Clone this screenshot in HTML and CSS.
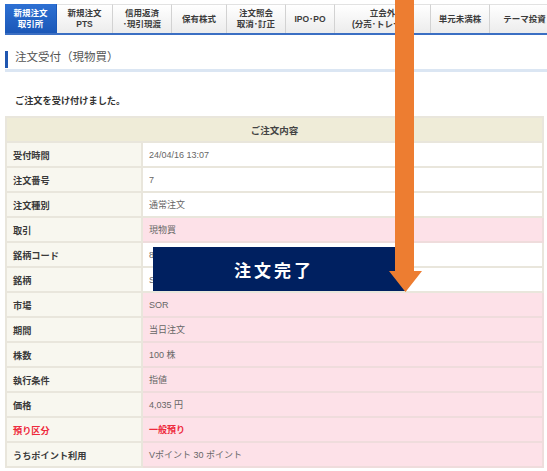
FILE: index.html
```html
<!DOCTYPE html>
<html lang="ja">
<head>
<meta charset="utf-8">
<link rel="stylesheet" href="styles.css">
</head>
<body>
<div class="page">
  <nav class="tabs">
    <div class="tab active w1">新規注文<br>取引所</div>
    <div class="tab w2">新規注文<br>PTS</div>
    <div class="tab w3">信用返済<br>･現引現渡</div>
    <div class="tab w4">保有株式</div>
    <div class="tab w5">注文照会<br>取消･訂正</div>
    <div class="tab w6">IPO･PO</div>
    <div class="tab w7">立会外<br>(分売･トレード)</div>
    <div class="tab w8">単元未満株</div>
    <div class="tab w9">テーマ投資</div>
  </nav>

  <h1 class="title">注文受付（現物買）</h1>

  <p class="msg">ご注文を受け付けました。</p>

  <table class="order">
    <thead>
      <tr><th colspan="2" class="head">ご注文内容</th></tr>
    </thead>
    <tbody>
      <tr><th class="lbl">受付時間</th><td class="val">24/04/16 13:07</td></tr>
      <tr><th class="lbl">注文番号</th><td class="val">7</td></tr>
      <tr><th class="lbl">注文種別</th><td class="val">通常注文</td></tr>
      <tr><th class="lbl">取引</th><td class="val pink">現物買</td></tr>
      <tr><th class="lbl">銘柄コード</th><td class="val">8473</td></tr>
      <tr><th class="lbl">銘柄</th><td class="val">SBIホールディングス</td></tr>
      <tr><th class="lbl">市場</th><td class="val pink">SOR</td></tr>
      <tr><th class="lbl">期間</th><td class="val pink">当日注文</td></tr>
      <tr><th class="lbl">株数</th><td class="val pink">100 株</td></tr>
      <tr><th class="lbl">執行条件</th><td class="val pink">指値</td></tr>
      <tr><th class="lbl">価格</th><td class="val pink">4,035 円</td></tr>
      <tr><th class="lbl warn">預り区分</th><td class="val pink warn">一般預り</td></tr>
      <tr><th class="lbl">うちポイント利用</th><td class="val pink">Vポイント 30 ポイント</td></tr>
    </tbody>
  </table>

  <div class="banner">注文完了</div>

  <svg class="arrow" width="40" height="295" viewBox="0 0 40 295" aria-hidden="true">
    <path d="M8 0 H27 V271 H35 L18.5 292 L2 271 H8 Z" fill="#ed7d31"/>
  </svg>
</div>
</body>
</html>
```

FILE: styles.css
```css
html, body {
  margin: 0;
  padding: 0;
  background: #ffffff;
}

body {
  font-family: "Liberation Sans", "Noto Sans CJK JP", sans-serif;
  color: #444;
}

.page {
  position: relative;
  width: 547px;
  height: 471px;
  overflow: hidden;
  padding: 4px 0 0 5px;
  box-sizing: border-box;
}

/* ---------- tabs ---------- */
.tabs {
  display: flex;
  height: 29px;
  border-bottom: 2px solid #3b6fc3;
  white-space: nowrap;
}

.tab {
  flex: none;
  display: flex;
  align-items: center;
  justify-content: center;
  text-align: center;
  box-sizing: border-box;
  font-size: 8.5px;
  line-height: 11px;
  font-weight: bold;
  color: #3c3c3c;
  background: linear-gradient(#ffffff, #ececec);
  border-right: 1px solid #d2d2d2;
  border-top: 1px solid #e2e2e2;
}

.tab.active {
  color: #ffffff;
  background: linear-gradient(#2c6fd2, #1b58b8);
  border-top-color: #2c6fd2;
  border-right-color: #1b58b8;
}

.w1 { width: 52px; }
.w2 { width: 56px; }
.w3 { width: 59px; }
.w4 { width: 55px; }
.w5 { width: 59px; }
.w6 { width: 49px; }
.w7 { width: 96px; }
.w8 { width: 59px; }
.w9 { width: 70px; }

/* ---------- title ---------- */
.title {
  margin: 16px 0 0 0;
  height: 12px;
  padding: 0 0 5px 7px;
  border-left: 3px solid #1f56b0;
  font-size: 11.5px;
  line-height: 12px;
  font-weight: normal;
  color: #555;
  position: relative;
}

.title::after {
  content: "";
  position: absolute;
  left: -3px;
  right: 0;
  top: 18px;
  height: 3px;
  background: #dbe6f3;
}

.msg {
  margin: 27px 0 0 10px;
  font-size: 9.2px;
  line-height: 12px;
  font-weight: bold;
  color: #333;
}

/* ---------- table ---------- */
.order {
  margin-top: 9px;
  width: 539px;
  border-collapse: collapse;
  font-size: 9px;
}

.order th,
.order td {
  height: 23px;
  padding: 0 6px;
  border: 2px solid #e9e6dc;
  text-align: left;
  vertical-align: middle;
}

.order .head {
  background: #efecd8;
  text-align: center;
  font-weight: bold;
  font-size: 9.5px;
  color: #444;
}

.order .lbl {
  width: 122px;
  background: #f8f7ef;
  font-weight: bold;
  color: #3a3a3a;
  font-size: 9.2px;
}

.order .val {
  background: #ffffff;
  color: #666;
  font-weight: normal;
}

.order .val.pink {
  background: #fde1e8;
  border-color: #efdcdc;
}

.order .warn {
  color: #ee2a3c;
  font-weight: bold;
}

/* ---------- overlays ---------- */
.banner {
  position: absolute;
  left: 153px;
  top: 247px;
  width: 252px;
  height: 44px;
  box-sizing: border-box;
  padding-right: 10px;
  background: #002060;
  color: #ffffff;
  font-family: "Noto Sans CJK JP", sans-serif;
  font-weight: bold;
  font-size: 17px;
  letter-spacing: 3px;
  display: flex;
  align-items: center;
  justify-content: center;
}

.arrow {
  position: absolute;
  left: 387px;
  top: 0;
}
```
